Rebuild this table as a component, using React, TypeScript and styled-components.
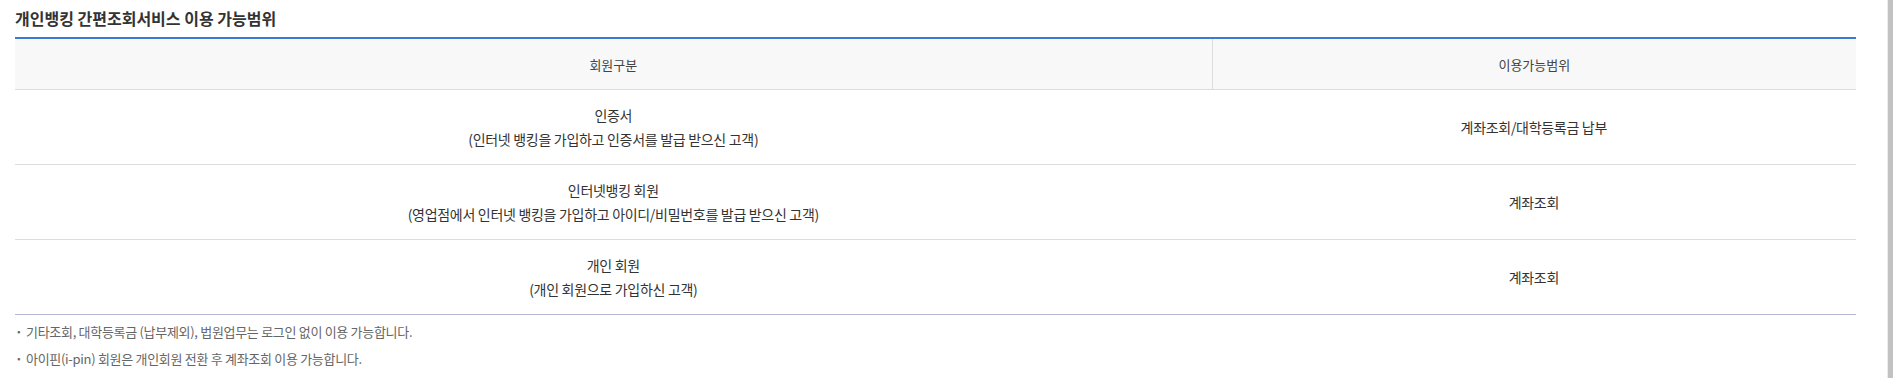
import React from "react";
import styled, { createGlobalStyle } from "styled-components";

const GlobalStyle = createGlobalStyle`
	html, body {
		margin: 0;
		padding: 0;
		background: #fff;
	}
	body {
		font-family: "Noto Sans CJK KR", "Noto Sans", sans-serif;
		color: #333;
	}
`;

type TRow = { member: string; desc: string; scope: string };

const rows: TRow[] = [
	{
		member: "인증서",
		desc: "(인터넷 뱅킹을 가입하고 인증서를 발급 받으신 고객)",
		scope: "계좌조회/대학등록금 납부",
	},
	{
		member: "인터넷뱅킹 회원",
		desc: "(영업점에서 인터넷 뱅킹을 가입하고 아이디/비밀번호를 발급 받으신 고객)",
		scope: "계좌조회",
	},
	{
		member: "개인 회원",
		desc: "(개인 회원으로 가입하신 고객)",
		scope: "계좌조회",
	},
];

const notes = [
	"기타조회, 대학등록금 (납부제외), 법원업무는 로그인 없이 이용 가능합니다.",
	"아이핀(i-pin) 회원은 개인회원 전환 후 계좌조회 이용 가능합니다.",
];

const App = () => (
	<Page>
		<GlobalStyle />
		<Content>
			<Title>개인뱅킹 간편조회서비스 이용 가능범위</Title>
			<Table>
				<HeadRow>
					<HeadCell>회원구분</HeadCell>
					<HeadCell divider>이용가능범위</HeadCell>
				</HeadRow>
				{rows.map((r, i) => (
					<BodyRow key={r.member} last={i === rows.length - 1}>
						<Cell>
							<div>{r.member}</div>
							<div>{r.desc}</div>
						</Cell>
						<Cell>{r.scope}</Cell>
					</BodyRow>
				))}
			</Table>
			<Notes>
				{notes.map((n) => (
					<Note key={n}>{n}</Note>
				))}
			</Notes>
		</Content>
		<ScrollTrack />
	</Page>
);

export default App;

const Page = styled.div`
	display: flex;
	width: 1893px;
	height: 378px;
	overflow: hidden;
`;

const Content = styled.main`
	flex: 1;
	padding: 0 31px 0 15px;
`;

const ScrollTrack = styled.div`
	width: 5px;
	border-left: 1px solid #ececec;
	background: #c2c2c2;
`;

const Title = styled.h2`
	margin: 0;
	padding: 8px 0 9px;
	font-size: 16px;
	line-height: 20px;
	font-weight: 700;
	color: #333;
`;

const Table = styled.div`
	border-top: 2px solid #3a7bd5;
`;

const HeadRow = styled.div`
	display: grid;
	grid-template-columns: 65% 35%;
	height: 50px;
	background: #f8f8f8;
	border-bottom: 1px solid #ddd;
`;

const HeadCell = styled.div<{ divider?: boolean }>`
	display: flex;
	align-items: center;
	justify-content: center;
	font-size: 13px;
	color: #444;
	border-left: ${({ divider }) => (divider ? "1px solid #ddd" : "none")};
`;

const BodyRow = styled.div<{ last?: boolean }>`
	display: grid;
	grid-template-columns: 65% 35%;
	height: 74px;
	border-bottom: 1px solid ${({ last }) => (last ? "#b6b9d5" : "#ddd")};
`;

const Cell = styled.div`
	display: flex;
	flex-direction: column;
	align-items: center;
	justify-content: center;
	font-size: 14px;
	line-height: 24px;
	letter-spacing: -0.3px;
	color: #333;
`;

const Notes = styled.ul`
	list-style: none;
	margin: 3px 0 0;
	padding: 0;
`;

const Note = styled.li`
	position: relative;
	padding-left: 11px;
	font-size: 13px;
	line-height: 27px;
	letter-spacing: -0.3px;
	color: #666;

	&:before {
		content: "·";
		position: absolute;
		left: 0;
		top: 0;
		font-weight: 700;
	}
`;
